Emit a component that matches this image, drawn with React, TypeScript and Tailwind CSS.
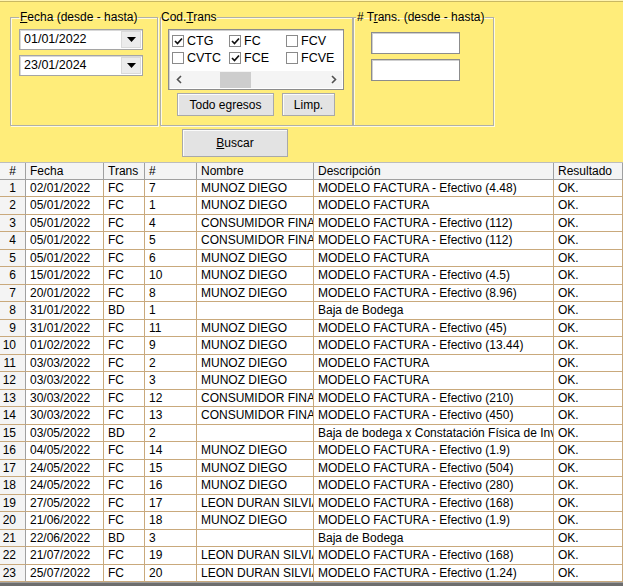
import React from "react";

type Row = [string, string, string, string, string, string];

const rows: Row[] = [
  ["1", "02/01/2022", "FC", "7", "MUNOZ DIEGO", "MODELO FACTURA - Efectivo (4.48)"],
  ["2", "05/01/2022", "FC", "1", "MUNOZ DIEGO", "MODELO FACTURA"],
  ["3", "05/01/2022", "FC", "4", "CONSUMIDOR FINAL", "MODELO FACTURA - Efectivo (112)"],
  ["4", "05/01/2022", "FC", "5", "CONSUMIDOR FINAL", "MODELO FACTURA - Efectivo (112)"],
  ["5", "05/01/2022", "FC", "6", "MUNOZ DIEGO", "MODELO FACTURA"],
  ["6", "15/01/2022", "FC", "10", "MUNOZ DIEGO", "MODELO FACTURA - Efectivo (4.5)"],
  ["7", "20/01/2022", "FC", "8", "MUNOZ DIEGO", "MODELO FACTURA - Efectivo (8.96)"],
  ["8", "31/01/2022", "BD", "1", "", "Baja de Bodega"],
  ["9", "31/01/2022", "FC", "11", "MUNOZ DIEGO", "MODELO FACTURA - Efectivo (45)"],
  ["10", "01/02/2022", "FC", "9", "MUNOZ DIEGO", "MODELO FACTURA - Efectivo (13.44)"],
  ["11", "03/03/2022", "FC", "2", "MUNOZ DIEGO", "MODELO FACTURA"],
  ["12", "03/03/2022", "FC", "3", "MUNOZ DIEGO", "MODELO FACTURA"],
  ["13", "30/03/2022", "FC", "12", "CONSUMIDOR FINAL", "MODELO FACTURA - Efectivo (210)"],
  ["14", "30/03/2022", "FC", "13", "CONSUMIDOR FINAL", "MODELO FACTURA - Efectivo (450)"],
  ["15", "03/05/2022", "BD", "2", "", "Baja de bodega x Constatación Física de Inventario"],
  ["16", "04/05/2022", "FC", "14", "MUNOZ DIEGO", "MODELO FACTURA - Efectivo (1.9)"],
  ["17", "24/05/2022", "FC", "15", "MUNOZ DIEGO", "MODELO FACTURA - Efectivo (504)"],
  ["18", "24/05/2022", "FC", "16", "MUNOZ DIEGO", "MODELO FACTURA - Efectivo (280)"],
  ["19", "27/05/2022", "FC", "17", "LEON DURAN SILVIA", "MODELO FACTURA - Efectivo (168)"],
  ["20", "21/06/2022", "FC", "18", "MUNOZ DIEGO", "MODELO FACTURA - Efectivo (1.9)"],
  ["21", "22/06/2022", "BD", "3", "", "Baja de Bodega"],
  ["22", "21/07/2022", "FC", "19", "LEON DURAN SILVIA", "MODELO FACTURA - Efectivo (168)"],
  ["23", "25/07/2022", "FC", "20", "LEON DURAN SILVIA", "MODELO FACTURA - Efectivo (1.24)"],
];

function Check({ checked, label }: { checked: boolean; label: string }) {
  return (
    <div className="flex items-center h-[16.5px]">
      <div className="w-[12px] h-[12px] bg-white border border-[#8a8a8a] flex items-center justify-center">
        {checked && (
          <svg width="9" height="8" viewBox="0 0 9 8">
            <path d="M1 4 L3.5 6.5 L8 1.5" fill="none" stroke="#111" strokeWidth="1.7" />
          </svg>
        )}
      </div>
      <span className="ml-[3px] leading-none">{label}</span>
    </div>
  );
}

function TextBox({ w }: { w: string }) {
  return (
    <div
      className={`${w} h-[22px] bg-white border border-[#8c8c8c] shadow-[inset_1px_1px_0_#cfcfcf]`}
    />
  );
}

function DateBox({ value }: { value: string }) {
  return (
    <div className="w-[124px] h-[21px] bg-white border border-[#a5a5a5] shadow-[inset_1px_1px_0_#d8d8d8] flex items-center pl-[4px] pr-[1px]">
      <span className="flex-1 text-[12.5px]">{value}</span>
      <div className="w-[20px] h-[17px] bg-[#ececec] border border-[#dadada] flex items-center justify-center">
        <svg width="9" height="5" viewBox="0 0 9 5">
          <path d="M0 0 H9 L4.5 5 Z" fill="#000" />
        </svg>
      </div>
    </div>
  );
}

function WinButton({ w, h, children }: { w: string; h: string; children: React.ReactNode }) {
  return (
    <div
      className={`${w} ${h} bg-[#e3e3e3] border border-[#a9a9a9] shadow-[inset_1px_1px_0_#fbfbfb] flex items-center justify-center text-[12px]`}
    >
      {children}
    </div>
  );
}

const cols = "grid grid-cols-[26px_78px_41px_52px_117px_240px_69px]";

export default function App() {
  return (
    <div
      className="w-[623px] h-[586px] overflow-hidden bg-white text-black text-[12px] flex flex-col"
      style={{ fontFamily: '"Liberation Sans", Arial, sans-serif' }}
    >
      {/* Top filter panel */}
      <div className="h-[162px] shrink-0 bg-[#ffed7a] flex flex-col">
        <div className="h-[1px] bg-[#fff4b0]" />
        <div className="h-[1px] bg-[#c9b862]" />
        <div className="flex pl-[10px] pt-[8px]">
          {/* Fecha */}
          <fieldset className="m-0 p-0 w-[148px] h-[116px] border border-[#b0b0a8] shadow-[inset_1px_1px_0_#fffbe0,1px_1px_0_#fffbe0] min-w-0">
            <legend className="ml-[8px] px-[1px] leading-[14px]">
              <span className="underline">F</span>echa (desde - hasta)
            </legend>
            <div className="flex flex-col gap-[5px] pl-[8px] pt-[5px]">
              <DateBox value="01/01/2022" />
              <DateBox value="23/01/2024" />
            </div>
          </fieldset>

          {/* Cod.Trans */}
          <fieldset className="m-0 p-0 ml-[2px] w-[193px] h-[116px] border border-[#b0b0a8] shadow-[inset_1px_1px_0_#fffbe0,1px_1px_0_#fffbe0] min-w-0">
            <legend className="ml-0 px-0 leading-[14px]">
              Cod.<span className="underline">T</span>rans
            </legend>
            <div className="pl-[7px] pt-[5px] flex flex-col">
              <div className="w-[176px] h-[61px] bg-white border border-[#8c8c8c] shadow-[inset_1px_1px_0_#cfcfcf] flex flex-col">
                <div className="grid grid-cols-[57px_57px_57px] pl-[3px] pt-[3px] text-[12.5px]">
                  <Check checked label="CTG" />
                  <Check checked label="FC" />
                  <Check checked={false} label="FCV" />
                  <Check checked={false} label="CVTC" />
                  <Check checked label="FCE" />
                  <Check checked={false} label="FCVE" />
                </div>
                <div className="mt-auto mb-[1px] mx-[1px] h-[17px] bg-[#f4f4f4] flex items-center">
                  <div className="w-[17px] h-[17px] flex items-center justify-center">
                    <svg width="6" height="9" viewBox="0 0 6 9">
                      <path d="M5 1 L1.5 4.5 L5 8" fill="none" stroke="#505050" strokeWidth="1.6" />
                    </svg>
                  </div>
                  <div className="flex-1 h-full flex items-center">
                    <div className="ml-[33px] w-[31px] h-[16px] bg-[#cdcdcd]" />
                  </div>
                  <div className="w-[17px] h-[17px] flex items-center justify-center">
                    <svg width="6" height="9" viewBox="0 0 6 9">
                      <path d="M1 1 L4.5 4.5 L1 8" fill="none" stroke="#505050" strokeWidth="1.6" />
                    </svg>
                  </div>
                </div>
              </div>
              <div className="flex gap-[8px] pl-[9px] mt-[3px]">
                <WinButton w="w-[97px]" h="h-[23px]">Todo egresos</WinButton>
                <WinButton w="w-[53px]" h="h-[23px]">Limp.</WinButton>
              </div>
            </div>
          </fieldset>

          {/* # Trans */}
          <fieldset className="m-0 p-0 w-[141px] h-[116px] border border-[#b0b0a8] shadow-[inset_1px_1px_0_#fffbe0,1px_1px_0_#fffbe0] min-w-0">
            <legend className="ml-[2px] px-[1px] leading-[14px]">
              # T<span className="underline">r</span>ans. (desde - hasta)
            </legend>
            <div className="flex flex-col gap-[5px] pl-[17px] pt-[8px]">
              <TextBox w="w-[89px]" />
              <TextBox w="w-[89px]" />
            </div>
          </fieldset>
        </div>
        <div className="pl-[182px] mt-[3px]">
          <WinButton w="w-[106px]" h="h-[28px]">
            <span>
              <span className="underline">B</span>uscar
            </span>
          </WinButton>
        </div>
      </div>

      {/* Grid */}
      <div className="flex flex-col">
        <div className={`${cols} h-[17.5px] bg-[#f4f4f4] border-t border-[#bdbdbd]`}>
          {["#", "Fecha", "Trans", "#", "Nombre", "Descripción", "Resultado"].map((h, i) => (
            <div
              key={i}
              className={`border-r border-b border-[#a0a0a0] overflow-hidden whitespace-nowrap leading-[16px] ${
                i === 0 ? "text-center" : "pl-[4px]"
              }`}
            >
              {h}
            </div>
          ))}
        </div>
        {rows.map((r) => (
          <div key={r[0]} className={`${cols} h-[17.5px]`}>
            <div className="bg-[#f4f4f4] border-r border-r-[#a0a0a0] border-b border-b-[#c9a97c] text-right pr-[9px] leading-[16.5px]">
              {r[0]}
            </div>
            {[r[1], r[2], r[3], r[4], r[5], "OK."].map((c, i) => (
              <div
                key={i}
                className="border-r border-b border-[#c9a97c] pl-[4px] overflow-hidden whitespace-nowrap leading-[16.5px]"
              >
                {c}
              </div>
            ))}
          </div>
        ))}
        <div className="h-[1px] bg-[#a0a0a0]" />
        <div className="h-[3px] bg-[#6d6d6d]" />
      </div>
    </div>
  );
}
